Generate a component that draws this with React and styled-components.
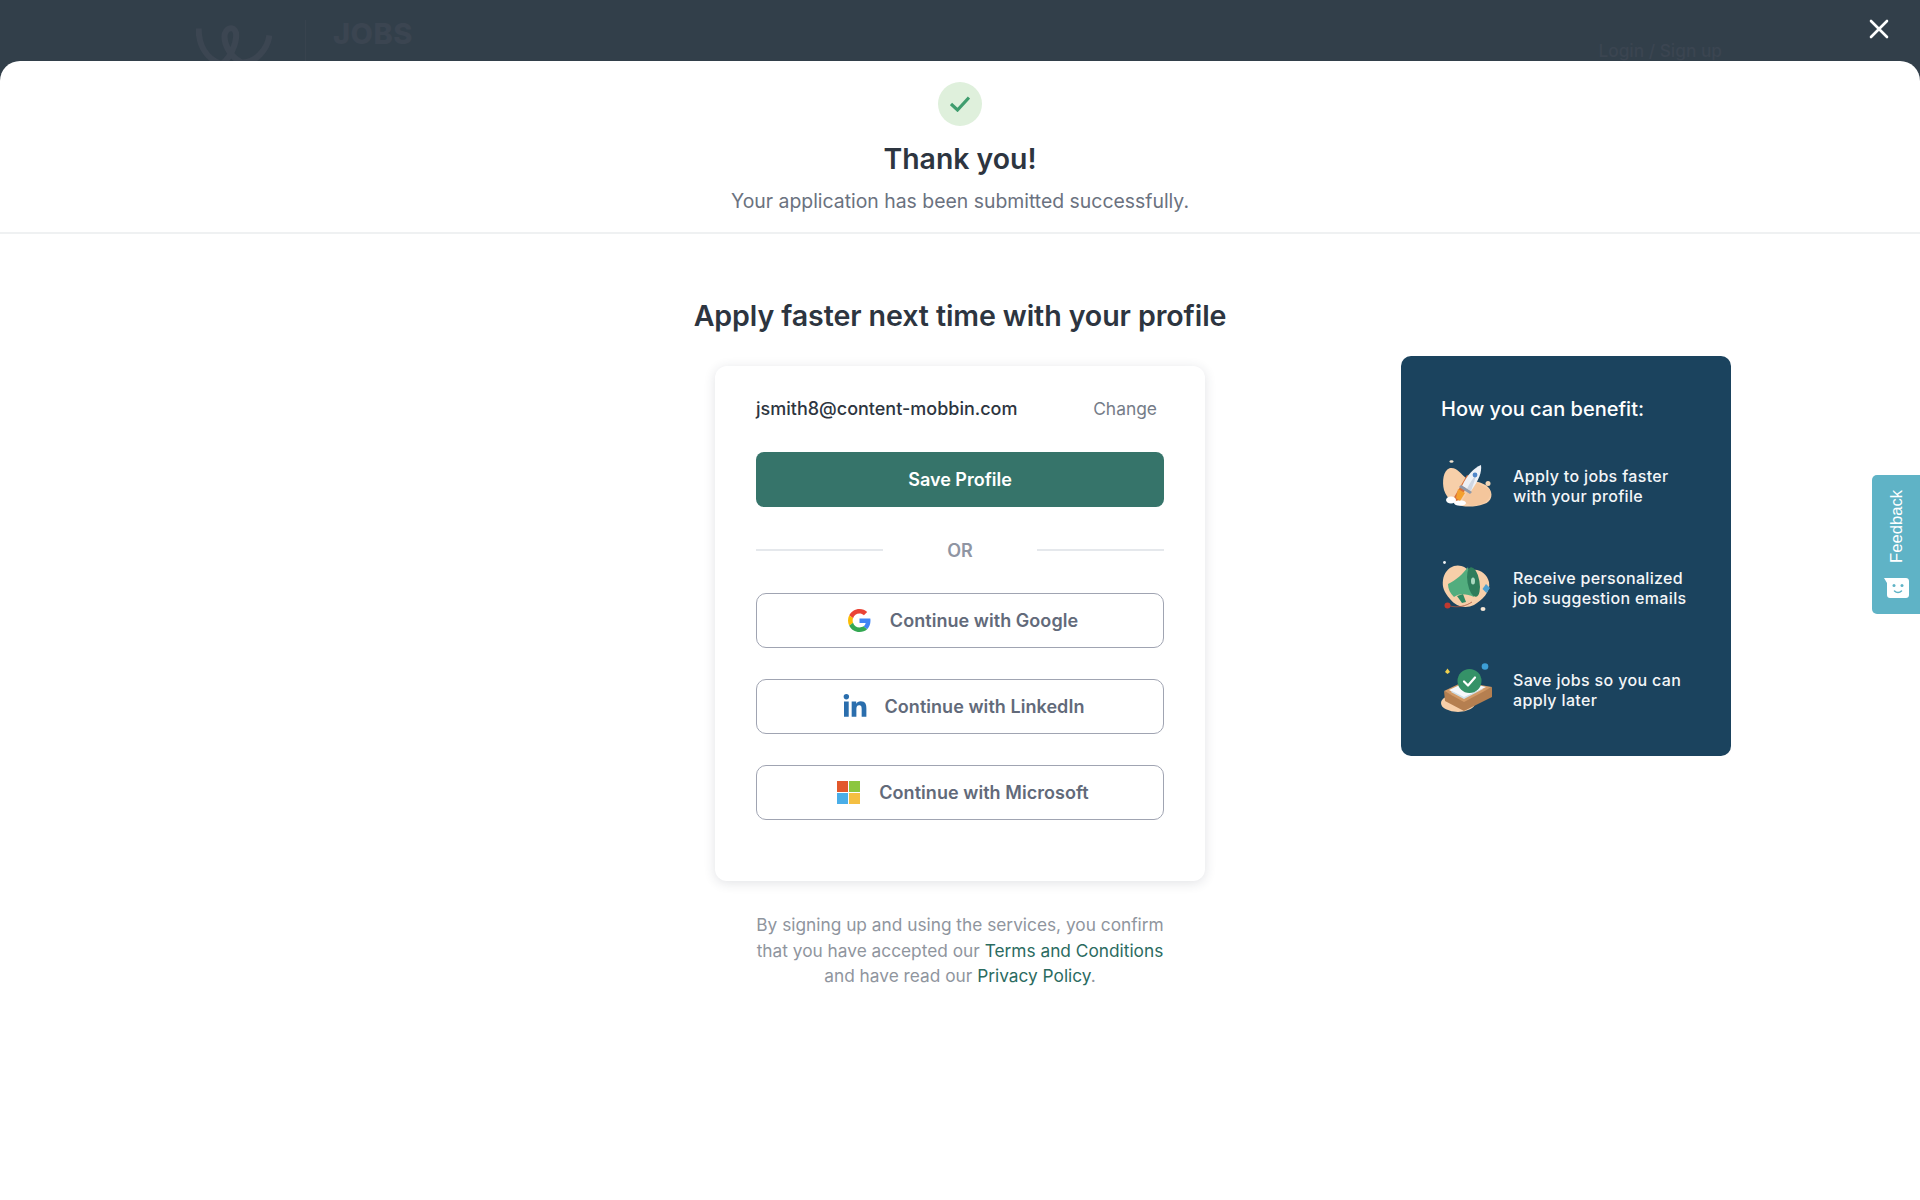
import React from "react";
import styled, { createGlobalStyle } from "styled-components";
import { FaLinkedinIn } from "react-icons/fa";

const GlobalStyle = createGlobalStyle`
  html, body {
    margin: 0;
    padding: 0;
    background: #323f4a;
    font-family: Inter, "Liberation Sans", sans-serif;
  }
  * {
    box-sizing: border-box;
  }
`;

/* page behind the sheet */
const Page = styled.div`
  position: relative;
  width: 1920px;
  height: 1200px;
  overflow: hidden;
  background: #323f4a;
`;

const BackBar = styled.div`
  height: 61px;
  overflow: hidden;
  display: flex;
  justify-content: space-between;
  padding: 0 198px 0 196px;
  color: #3b4551;
`;

const BackLogo = styled.div`
  display: flex;
  align-items: flex-start;
  padding-top: 20px;
`;

const BackRule = styled.div`
  width: 1px;
  height: 50px;
  margin: 0 27px 0 33px;
  background: #38434e;
`;

const BackBrand = styled.div`
  font-size: 29px;
  line-height: 28px;
  font-weight: 800;
  letter-spacing: 0.5px;
`;

const BackLogin = styled.div`
  padding-top: 40px;
  font-size: 17.3px;
  line-height: 22px;
  font-weight: 500;
`;

const CloseButton = styled.button`
  position: absolute;
  top: 18px;
  right: 30px;
  width: 22px;
  height: 22px;
  padding: 0;
  border: 0;
  background: none;
  cursor: pointer;
`;

/* white sheet */
const Sheet = styled.div`
  height: 1139px;
  background: #fff;
  border-radius: 20px 20px 0 0;
`;

const Header = styled.header`
  height: 173px;
  padding-top: 21px;
  border-bottom: 2px solid #eff1f2;
  display: flex;
  flex-direction: column;
  align-items: center;
`;

const CheckCircle = styled.div`
  width: 44px;
  height: 44px;
  border-radius: 50%;
  background: #dff0dc;
  display: flex;
  align-items: center;
  justify-content: center;
`;

const Title = styled.h1`
  margin: 15px 0 0;
  font-size: 28.4px;
  line-height: 36px;
  font-weight: 600;
  color: #2d3540;
`;

const Subtitle = styled.p`
  margin: 12px 0 0;
  font-size: 19.4px;
  line-height: 24px;
  color: #6b7280;
`;

const Main = styled.main`
  display: grid;
  grid-template-columns: 1fr 550px 1fr;
  padding-top: 64px;
`;

const Center = styled.section`
  grid-column: 2;
  display: flex;
  flex-direction: column;
  align-items: center;
`;

const Heading = styled.h2`
  margin: 0 0 32px;
  font-size: 28.6px;
  line-height: 36px;
  font-weight: 600;
  letter-spacing: -0.1px;
  color: #2d3540;
  white-space: nowrap;
`;

const Card = styled.div`
  width: 490px;
  padding: 30px 41px 61px;
  border-radius: 12px;
  background: #fff;
  box-shadow: 0 2px 12px rgba(40, 50, 70, 0.14);
`;

const EmailRow = styled.div`
  display: flex;
  justify-content: space-between;
  padding-right: 7px;
  margin-bottom: 30px;
  font-size: 18px;
  line-height: 26px;
`;

const Email = styled.span`
  font-weight: 500;
  color: #2d3540;
`;

const Change = styled.span`
  font-size: 17.4px;
  color: #757c88;
`;

const SaveButton = styled.button`
  display: block;
  width: 100%;
  height: 55px;
  border: 0;
  border-radius: 8px;
  background: #36746a;
  color: #fff;
  font: 600 18px Inter, sans-serif;
  cursor: pointer;
`;

const OrRow = styled.div`
  display: flex;
  align-items: center;
  justify-content: space-between;
  height: 22px;
  margin: 32px 0;
  font-size: 18px;
  font-weight: 600;
  color: #8f95a3;
`;

const OrLine = styled.span`
  width: 127px;
  height: 2px;
  background: #e5e8ec;
`;

const SocialList = styled.div`
  display: flex;
  flex-direction: column;
  gap: 31px;
`;

const SocialButton = styled.button`
  display: flex;
  align-items: center;
  justify-content: center;
  gap: ${(props) => props.$gap || 19}px;
  width: 100%;
  height: 55px;
  padding: 0 0 0 6px;
  border: 1.5px solid #a0a4b2;
  border-radius: 10px;
  background: #fff;
  color: #626a7a;
  font: 600 18px Inter, sans-serif;
  letter-spacing: 0.05px;
  cursor: pointer;
`;

const Terms = styled.p`
  margin: 31px 0 0;
  font-size: 17.3px;
  line-height: 25.5px;
  text-align: center;
  color: #8f959e;
`;

const TermsLink = styled.a`
  color: #2b6b5f;
  text-decoration: none;
`;

/* benefits panel */
const Panel = styled.aside`
  grid-column: 3;
  align-self: start;
  width: 330px;
  margin: 58px 0 0 166px;
  padding: 40px 20px 39px 40px;
  border-radius: 10px;
  background: #1b435e;
  color: #fff;
`;

const PanelTitle = styled.h3`
  margin: 0 0 37px;
  font-size: 20px;
  line-height: 26px;
  font-weight: 500;
`;

const Benefits = styled.div`
  display: flex;
  flex-direction: column;
  gap: 48px;
`;

const Benefit = styled.div`
  display: flex;
  align-items: center;
  gap: 18px;
  height: 54px;
  font-size: 16px;
  line-height: 20px;
  font-weight: 500;
  letter-spacing: 0.34px;
  color: #f4f6f8;
  white-space: pre-line;
`;

/* feedback tab */
const FeedbackTab = styled.div`
  position: absolute;
  top: 475px;
  right: 0;
  width: 48px;
  height: 139px;
  padding-top: 15px;
  border-radius: 5px 0 0 5px;
  background: #5fb3c6;
  display: flex;
  flex-direction: column;
  align-items: center;
  gap: 15px;
`;

const FeedbackLabel = styled.span`
  margin-left: 2px;
  writing-mode: vertical-rl;
  transform: rotate(180deg);
  font-family: "Liberation Sans", sans-serif;
  font-size: 16.6px;
  line-height: 22px;
  color: #fff;
`;

const GoogleIcon = () => (
  <svg width="23" height="23" viewBox="0 0 48 48">
    <path fill="#EA4335" d="M24 9.5c3.5 0 6.7 1.2 9.2 3.6l6.9-6.9C35.9 2.4 30.5 0 24 0 14.6 0 6.5 5.4 2.6 13.2l8 6.2C12.4 13.7 17.7 9.5 24 9.5z" />
    <path fill="#4285F4" d="M46.9 24.5c0-1.6-.1-3.1-.4-4.5H24v9h12.9c-.6 3-2.2 5.5-4.7 7.2l7.7 6c4.5-4.2 7-10.3 7-17.7z" />
    <path fill="#FBBC05" d="M10.5 28.6c-.5-1.4-.8-3-.8-4.6s.3-3.2.8-4.6l-8-6.2C.9 16.5 0 20.1 0 24s.9 7.500 2.600 10.800l7.900-6.200z" />
    <path fill="#34A853" d="M24 48c6.500 0 11.900-2.100 15.900-5.800l-7.700-6c-2.100 1.400-4.900 2.300-8.200 2.300-6.300 0-11.600-4.200-13.500-9.900l-8 6.200C6.500 42.600 14.600 48 24 48z" />
  </svg>
);

const MicrosoftIcon = () => (
  <svg width="23" height="23" viewBox="0 0 23 23">
    <rect width="11" height="11" fill="#e2582b" />
    <rect x="12" width="11" height="11" fill="#8cc63f" />
    <rect y="12" width="11" height="11" fill="#4aaee8" />
    <rect x="12" y="12" width="11" height="11" fill="#f4bf42" />
  </svg>
);

const RocketArt = () => (
  <svg width="54" height="54" viewBox="11 5 54 54">
    <path fill="#f7cfa9" d="M20 14C27 13 31 20 36 24C42 28 52 27 58 33C64 39 62 48 54 50C46 53 38 53 32 52C24 50 17 45 14 36C12 28 13 16 20 14Z" />
    <path fill="#efb98a" d="M44 27L60 36C63 46 52 51 42 52L32 47Z" opacity="0.4" />
    <path fill="#d8703a" d="M37 21L42 24L28 48L23 45Z" />
    <ellipse cx="21" cy="46" rx="5" ry="3.500" fill="#fff" />
    <ellipse cx="30" cy="49" rx="6" ry="2.800" fill="#fff" />
    <path fill="#f3a02e" d="M28 35L35 39L30 47L26 44Z" />
    <path fill="#eef1f6" d="M51 11C52 18 49 26 41 37L32 32C37 21 44 14 51 11Z" />
    <path fill="#cfd6e2" d="M46.500 20C45 26 43 31 41 37L37 34.800C40 29 43 24 46.500 20Z" />
    <circle cx="45" cy="21" r="2.400" fill="#4f86c9" />
    <path fill="#8d98aa" d="M31 31L42 38L40 40L29 33Z" />
    <ellipse cx="21.500" cy="7.500" rx="2" ry="1.200" fill="#f2e3d0" />
    <circle cx="58" cy="29.500" r="2.500" fill="#f2d6b6" />
  </svg>
);

const MegaphoneArt = () => (
  <svg width="54" height="54" viewBox="11 5 54 54">
    <path fill="#f7cfa9" d="M24 10C31 8 36 12 40 15C47 11 57 17 59 26C61 36 52 44 44 49C36 53 26 51 20 43C14 36 12 31 13 24C14 17 18 12 24 10Z" />
    <circle cx="14.500" cy="6.500" r="1.400" fill="#eef2f4" />
    <ellipse cx="53" cy="53" rx="2.500" ry="2" fill="#f4e6d6" />
    <path stroke="#a8563f" strokeWidth="0.800" fill="none" d="M20 50C28 52 36 50 42 46" />
    <circle cx="17.500" cy="49.500" r="3" fill="#c0392f" />
    <path fill="#2f8a62" d="M27 40L33 38L36 46L32 47Z" />
    <path fill="#52ad7e" d="M18 28C26 24 33 18 38 11L44 41C37 38 30 37 24 41C20 37 18 33 18 28Z" />
    <ellipse cx="43.500" cy="26" rx="6" ry="15" fill="#2e7d5b" transform="rotate(-10 43.500 26)" />
    <ellipse cx="43" cy="25" rx="2" ry="3.500" fill="#a9d9c0" />
    <path fill="#4c9fd0" d="M56 28L60 32L56.500 37L52.500 33Z" />
  </svg>
);

const BoxArt = () => (
  <svg width="54" height="54" viewBox="11 5 54 54">
    <ellipse cx="28" cy="45" rx="17" ry="9" fill="#f7cfa9" />
    <path fill="#b57f50" d="M14 33L33 42L62 29L62 39L34 53L15 43Z" />
    <path fill="#d39a66" d="M14 33L33 24L62 29L34 44Z" />
    <path fill="#f6f8fb" d="M19 32L36 24L56 29L34 40Z" />
    <path fill="#cfe0ea" d="M22 33L34 39L52 31L53 31L34 41L21 34Z" />
    <circle cx="39.500" cy="23" r="12" fill="#359268" />
    <path fill="none" stroke="#fff" strokeWidth="2.200" strokeLinecap="round" strokeLinejoin="round" d="M34 23.500L38 27.500L45 19.500" />
    <circle cx="55" cy="8.500" r="3.300" fill="#3d9fd6" />
    <path fill="#f0d04e" d="M17.500 10.500L20 14L17.500 16L15 14Z" />
  </svg>
);

const SmileBubble = () => (
  <svg width="25" height="20" viewBox="0 0 25 20">
    <path fill="#fff" d="M0 0H22C23.700 0 25 1.300 25 3V17C25 18.700 23.700 20 22 20H6C4.300 20 3 18.700 3 17V5Z" />
    <circle cx="10" cy="7.500" r="1.500" fill="#5fb3c6" />
    <circle cx="18" cy="7.500" r="1.500" fill="#5fb3c6" />
    <path fill="none" stroke="#5fb3c6" strokeWidth="1.500" strokeLinecap="round" d="M10.500 13C12.500 15 15.500 15 17.500 13" />
  </svg>
);

const benefits = [
  { text: "Apply to jobs faster\nwith your profile", Art: RocketArt },
  { text: "Receive personalized\njob suggestion emails", Art: MegaphoneArt },
  { text: "Save jobs so you can\napply later", Art: BoxArt },
];

const App = () => {
  return (
    <Page>
      <GlobalStyle />
      <BackBar>
        <BackLogo>
          <svg width="76" height="50" viewBox="0 0 87 50" fill="none" stroke="#3c4652" strokeWidth="7">
            <path d="M3 6C3 30 16 42 29 47C40 40 46 22 46 14C46 4 36 3 33 12C31 22 38 38 52 45C68 46 82 30 84 14" />
          </svg>
          <BackRule />
          <BackBrand>JOBS</BackBrand>
        </BackLogo>
        <BackLogin>Login / Sign up</BackLogin>
      </BackBar>
      <CloseButton aria-label="Close">
        <svg width="22" height="22" viewBox="0 0 22 22" stroke="#fff" strokeWidth="2.600" strokeLinecap="round">
          <path d="M3 3L19 19M19 3L3 19" />
        </svg>
      </CloseButton>

      <Sheet>
        <Header>
          <CheckCircle>
            <svg width="20" height="16" viewBox="0 0 20 16" fill="none" stroke="#3f9d6e" strokeWidth="3.200">
              <path d="M1 8L7.500 14L19 1.500" />
            </svg>
          </CheckCircle>
          <Title>Thank you!</Title>
          <Subtitle>Your application has been submitted successfully.</Subtitle>
        </Header>

        <Main>
          <Center>
            <Heading>Apply faster next time with your profile</Heading>
            <Card>
              <EmailRow>
                <Email>jsmith8@content-mobbin.com</Email>
                <Change>Change</Change>
              </EmailRow>
              <SaveButton>Save Profile</SaveButton>
              <OrRow>
                <OrLine />
                OR
                <OrLine />
              </OrRow>
              <SocialList>
                <SocialButton>
                  <GoogleIcon />
                  Continue with Google
                </SocialButton>
                <SocialButton $gap={17}>
                  <FaLinkedinIn size={26} color="#2a6ead" />
                  Continue with LinkedIn
                </SocialButton>
                <SocialButton>
                  <MicrosoftIcon />
                  Continue with Microsoft
                </SocialButton>
              </SocialList>
            </Card>
            <Terms>
              By signing up and using the services, you confirm
              <br />
              that you have accepted our <TermsLink href="#">Terms and Conditions</TermsLink>
              <br />
              and have read our <TermsLink href="#">Privacy Policy</TermsLink>.
            </Terms>
          </Center>

          <Panel>
            <PanelTitle>How you can benefit:</PanelTitle>
            <Benefits>
              {benefits.map(({ text, Art }) => (
                <Benefit key={text}>
                  <Art />
                  <span>{text}</span>
                </Benefit>
              ))}
            </Benefits>
          </Panel>
        </Main>
      </Sheet>

      <FeedbackTab>
        <FeedbackLabel>Feedback</FeedbackLabel>
        <SmileBubble />
      </FeedbackTab>
    </Page>
  );
};

export default App;
